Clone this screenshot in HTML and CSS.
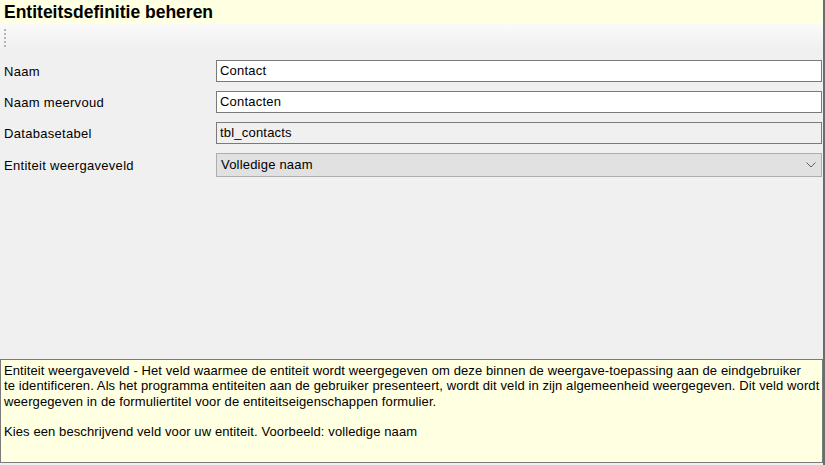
FILE: index.html
```html
<!DOCTYPE html>
<html lang="nl">
<head>
<meta charset="utf-8">
<title>Entiteitsdefinitie beheren</title>
<link rel="stylesheet" href="styles.css">
</head>
<body>
<div class="window">
  <div class="title">Entiteitsdefinitie beheren</div>
  <div class="toolbar"><span class="grip"><i></i><i></i><i></i><i></i><i></i></span></div>
  <div class="form">
    <label class="lbl">Naam</label>
    <div class="field">Contact</div>
    <label class="lbl">Naam meervoud</label>
    <div class="field">Contacten</div>
    <label class="lbl">Databasetabel</label>
    <div class="field readonly">tbl_contacts</div>
    <label class="lbl">Entiteit weergaveveld</label>
    <div class="field combo"><span>Volledige naam</span>
      <svg class="chev" width="10" height="6" viewBox="0 0 10 6"><path d="M0.5 0.5 L5 5 L9.5 0.5" fill="none" stroke="#5f5f5f" stroke-width="1"/></svg>
    </div>
  </div>
  <div class="spacer"></div>
  <div class="help">
    <p>Entiteit weergaveveld - Het veld waarmee de entiteit wordt weergegeven om deze binnen de weergave-toepassing aan de eindgebruiker<br>te identificeren. Als het programma entiteiten aan de gebruiker presenteert, wordt dit veld in zijn algemeenheid weergegeven. Dit veld wordt<br>weergegeven in de formuliertitel voor de entiteitseigenschappen formulier.</p>
    <p>Kies een beschrijvend veld voor uw entiteit. Voorbeeld: volledige naam</p>
  </div>
</div>
</body>
</html>
```

FILE: styles.css
```css
html, body {
  margin: 0;
  padding: 0;
  background: #f0f0f0;
}
body {
  font-family: "Liberation Sans", Arial, sans-serif;
  font-size: 13px;
  color: #000;
}
.window {
  width: 823px;
  height: 465px;
  border-right: 2px solid #6b6b6b;
  display: flex;
  flex-direction: column;
  background: #f0f0f0;
}
.title {
  height: 24px;
  line-height: 24px;
  background: #ffffe1;
  font-weight: bold;
  font-size: 17.5px;
  padding-left: 4px;
  flex: none;
}
.toolbar {
  height: 26px;
  flex: none;
  background: linear-gradient(#fafafa, #f0f0f0);
  display: flex;
  padding-left: 4px;
  padding-top: 5px;
  box-sizing: border-box;
}
.grip {
  display: flex;
  flex-direction: column;
  gap: 2px;
}
.grip i {
  display: block;
  width: 2px;
  height: 2px;
  background: #b4b4b4;
}
.form {
  flex: none;
  display: grid;
  grid-template-columns: 216px 606px;
  grid-template-rows: 22px 22px 22px 24px;
  row-gap: 9px;
  padding-top: 10px;
  align-items: center;
}
.lbl {
  padding-left: 4px;
  letter-spacing: 0.3px;
}
.field {
  box-sizing: border-box;
  height: 22px;
  border: 1px solid #7a7a7a;
  background: #fff;
  padding-left: 3px;
  line-height: 20px;
  letter-spacing: 0.2px;
}
.field.readonly {
  background: #f0f0f0;
}
.field.combo {
  height: 24px;
  line-height: 22px;
  background: #e1e1e1;
  border-color: #adadad;
  padding-left: 4px;
  display: flex;
  justify-content: space-between;
  align-items: center;
}
.chev {
  margin-right: 5px;
}
.spacer {
  flex: 1;
}
.help {
  flex: none;
  height: 104px;
  box-sizing: border-box;
  border: 1px solid #7a7a7a;
  background: #ffffe1;
  padding: 3px 3px 0 3px;
  margin-bottom: 2px;
  line-height: 15.3px;
  letter-spacing: 0.1px;
  overflow: hidden;
}
.help p {
  margin: 0 0 15.3px 0;
  white-space: nowrap;
}
```
